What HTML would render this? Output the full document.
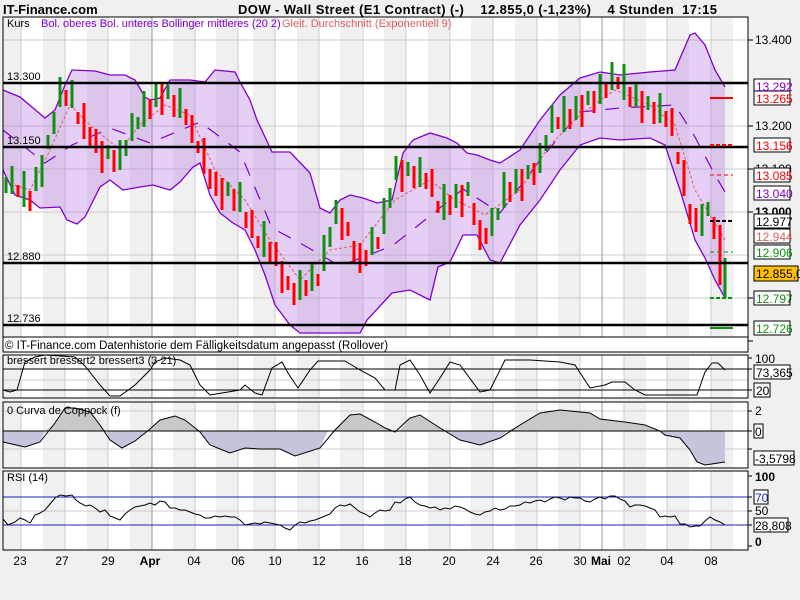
<!DOCTYPE html>
<html><head><meta charset="utf-8">
<style>
html,body{margin:0;padding:0;background:#f0f0f0;width:800px;height:600px;overflow:hidden}
svg{display:block}
text{font-family:"Liberation Sans",sans-serif}
</style></head><body>
<svg width="800" height="600" xmlns="http://www.w3.org/2000/svg">
<rect x="0" y="0" width="800" height="600" fill="#f0f0f0"/>
<rect x="3" y="17" width="745" height="320" fill="#fff"/>
<rect x="3" y="355" width="745" height="43" fill="#fff"/>
<rect x="3" y="402" width="745" height="66" fill="#fff"/>
<rect x="3" y="471" width="745" height="79" fill="#fff"/>
<g fill="#f0f0f0">
<rect x="3" y="17" width="18" height="533"/><rect x="43" y="17" width="22" height="533"/><rect x="87" y="17" width="21" height="533"/><rect x="130" y="17" width="22" height="533"/><rect x="173" y="17" width="22" height="533"/><rect x="216" y="17" width="22" height="533"/><rect x="253" y="17" width="22" height="533"/><rect x="297" y="17" width="22" height="533"/><rect x="340" y="17" width="22" height="533"/><rect x="384" y="17" width="22" height="533"/><rect x="428" y="17" width="22" height="533"/><rect x="471" y="17" width="22" height="533"/><rect x="515" y="17" width="22" height="533"/><rect x="558" y="17" width="22" height="533"/><rect x="624" y="17" width="22" height="533"/><rect x="667" y="17" width="22" height="533"/><rect x="711" y="17" width="22" height="533"/>
</g>
<g stroke="#ccc" stroke-width="1">
<line x1="21" y1="17" x2="21" y2="550"/><line x1="65" y1="17" x2="65" y2="550"/><line x1="108" y1="17" x2="108" y2="550"/><line x1="195" y1="17" x2="195" y2="550"/><line x1="238" y1="17" x2="238" y2="550"/><line x1="275" y1="17" x2="275" y2="550"/><line x1="319" y1="17" x2="319" y2="550"/><line x1="363" y1="17" x2="363" y2="550"/><line x1="406" y1="17" x2="406" y2="550"/><line x1="450" y1="17" x2="450" y2="550"/><line x1="493" y1="17" x2="493" y2="550"/><line x1="537" y1="17" x2="537" y2="550"/><line x1="580" y1="17" x2="580" y2="550"/><line x1="624" y1="17" x2="624" y2="550"/><line x1="667" y1="17" x2="667" y2="550"/><line x1="711" y1="17" x2="711" y2="550"/>
<line x1="3" y1="40" x2="748" y2="40"/><line x1="3" y1="126" x2="748" y2="126"/><line x1="3" y1="169" x2="748" y2="169"/><line x1="3" y1="212" x2="748" y2="212"/><line x1="3" y1="255" x2="748" y2="255"/><line x1="3" y1="298" x2="748" y2="298"/>
<line x1="3" y1="380" x2="748" y2="380"/><line x1="3" y1="411" x2="748" y2="411"/><line x1="3" y1="449" x2="748" y2="449"/><line x1="3" y1="511" x2="748" y2="511"/>
</g>
<g stroke="#999"><line x1="152" y1="17" x2="152" y2="550"/><line x1="602" y1="17" x2="602" y2="550"/></g>
<g fill="#f0f0f0"><rect x="0" y="352" width="748" height="3"/><rect x="0" y="398" width="748" height="4"/><rect x="0" y="468" width="748" height="3"/></g>

<polygon fill="rgba(175,110,225,0.33)" points="3,90 20,97 45,118 55,110 65,85 72,70 95,71 110,75 125,75 135,80 145,97 150,100 160,98 170,80 190,80 205,82 215,70 235,72 240,82 250,100 257,120 272,152 290,152 310,173 320,208 330,213 340,200 350,195 363,198 377,203 392,200 403,153 413,140 430,133 447,138 457,143 467,153 477,155 490,160 500,163 520,150 540,120 560,95 580,78 600,72 620,75 650,72 675,70 690,35 695,33 705,45 715,70 725,87 725,298 715,280 705,258 695,240 680,190 665,145 650,138 620,140 600,138 580,145 560,170 540,200 520,225 500,263 490,260 477,235 463,235 450,262 438,267 430,300 410,290 392,293 367,320 360,333 300,333 290,325 275,305 265,275 255,250 245,230 233,223 220,213 210,195 200,163 193,167 180,182 170,190 163,188 153,185 140,187 123,190 110,180 100,187 85,217 77,224 67,220 60,207 40,208 30,200 15,195 3,170"/>
<polyline fill="none" stroke="#8000d0" stroke-width="1.3" points="3,90 20,97 45,118 55,110 65,85 72,70 95,71 110,75 125,75 135,80 145,97 150,100 160,98 170,80 190,80 205,82 215,70 235,72 240,82 250,100 257,120 272,152 290,152 310,173 320,208 330,213 340,200 350,195 363,198 377,203 392,200 403,153 413,140 430,133 447,138 457,143 467,153 477,155 490,160 500,163 520,150 540,120 560,95 580,78 600,72 620,75 650,72 675,70 690,35 695,33 705,45 715,70 725,87"/>
<polyline fill="none" stroke="#8000d0" stroke-width="1.3" points="725,298 715,280 705,258 695,240 680,190 665,145 650,138 620,140 600,138 580,145 560,170 540,200 520,225 500,263 490,260 477,235 463,235 450,262 438,267 430,300 410,290 392,293 367,320 360,333 300,333 290,325 275,305 265,275 255,250 245,230 233,223 220,213 210,195 200,163 193,167 180,182 170,190 163,188 153,185 140,187 123,190 110,180 100,187 85,217 77,224 67,220 60,207 40,208 30,200 15,195 3,170"/>
<polyline fill="none" stroke="#8000d0" stroke-width="1.2" stroke-dasharray="14,12" points="3,130 45,163 72,145 110,128 150,143 200,122 240,152 272,228 300,243 340,266 392,246 430,216 463,189 500,213 540,160 580,112 620,108 675,105 695,137 715,175 725,192"/>
<polyline fill="none" stroke="#e06060" stroke-width="1" stroke-dasharray="3,2" points="5,182 30,190 50,150 70,105 90,125 120,150 140,125 165,105 190,115 215,170 245,200 270,240 300,280 330,250 360,245 395,200 430,180 455,200 485,215 520,190 550,145 580,115 615,90 650,105 675,125 695,190 725,240"/>

<path fill="none" stroke="#109010" stroke-width="3" d="M6 177V193M12 166V194M24 171V207M36 167V191M42 155V187M48 135V149M54 112V134M60 77V107M72 80V108M108 145V159M120 140V170M126 140V156M132 113V141M138 117V129M144 91V127M156 83V107M168 85V99M180 88V118M228 182V196M240 182V212M264 221V257M300 270V300M312 263V291M324 235V271M330 227V247M336 200V224M372 227V255M384 198V234M390 188V208M396 156V180M408 162V176M420 157V187M444 184V220M456 184V208M468 182V196M492 208V236M498 208V220M504 172V208M516 169V193M528 165V179M540 143V173M546 135V151M552 105V133M564 96V132M576 96V120M588 91V105M600 74V104M612 62V90M624 64V100M636 83V107M648 96V110M660 93V123M702 204V236M708 202V216M725 258V298"/>
<path fill="none" stroke="#ff0000" stroke-width="3" d="M18 185V197M30 191V211M66 90V106M78 112V124M84 103V139M90 127V147M96 129V153M102 141V173M114 150V172M150 99V119M162 83V115M174 95V117M186 109V125M192 115V143M198 141V153M204 138V174M210 169V189M216 172V196M222 178V210M234 189V211M246 212V228M252 210V238M258 236V248M270 242V262M276 242V266M282 261V293M288 276V290M294 283V305M306 280V296M318 274V286M342 208V240M348 222V236M354 241V263M360 243V273M366 250V266M378 237V249M402 160V192M414 166V188M426 173V189M432 169V197M438 201V213M450 195V215M462 185V217M474 203V225M480 220V250M486 228V244M510 182V202M522 169V201M534 163V185M558 117V129M570 109V129M582 95V127M594 91V113M606 82V98M618 77V89M630 87V107M642 91V123M654 102V124M666 111V127M672 108V136M678 152V164M684 160V196M690 204V224M696 208V232M714 217V239M720 225V285"/>

<g stroke="#000" stroke-width="2.5"><line x1="3" y1="83" x2="748" y2="83"/><line x1="3" y1="147" x2="748" y2="147"/><line x1="3" y1="263" x2="748" y2="263"/><line x1="3" y1="325" x2="748" y2="325"/></g>
<g font-size="11"><text x="7" y="80">13.300</text><text x="7" y="144">13.150</text><text x="7" y="260">12.880</text><text x="7" y="322">12.736</text></g>
<line x1="710" y1="98" x2="733" y2="98" stroke="#f00" stroke-width="2"/>
<line x1="710" y1="145" x2="733" y2="145" stroke="#f00" stroke-width="2" stroke-dasharray="4,2"/>
<line x1="710" y1="175" x2="733" y2="175" stroke="#f00" stroke-width="1" stroke-dasharray="4,3"/>
<line x1="710" y1="221" x2="733" y2="221" stroke="#000" stroke-width="2" stroke-dasharray="4,2"/>
<line x1="710" y1="252" x2="733" y2="252" stroke="#109010" stroke-width="1" stroke-dasharray="4,3"/>
<line x1="710" y1="298" x2="733" y2="298" stroke="#109010" stroke-width="2" stroke-dasharray="4,2"/>
<line x1="710" y1="328" x2="733" y2="328" stroke="#109010" stroke-width="2"/>
<text x="7" y="27" font-size="11">Kurs</text>
<text x="41" y="27" font-size="11" fill="#8000d0">Bol. oberes Bol. unteres Bollinger mittleres (20 2)</text>
<text x="282" y="27" font-size="11" fill="#e06060">Gleit. Durchschnitt (Exponentiell 9)</text>

<rect x="3" y="337" width="745" height="15" fill="#fff" stroke="#000"/>
<text x="5" y="349" font-size="11.5">© IT-Finance.com  Datenhistorie dem Fälligkeitsdatum angepasst (Rollover)</text>

<line x1="3" y1="369" x2="748" y2="369" stroke="#000"/><line x1="3" y1="390" x2="748" y2="390" stroke="#000"/>
<polyline fill="none" stroke="#000" points="3,390 10,392 17,390 25,362 35,357 45,355 75,357 85,366 100,385 110,396 120,396 135,385 150,370 155,362 165,358 180,360 190,365 200,385 210,395 240,390 245,385 255,393 262,395 272,368 282,362 288,373 298,388 310,370 318,361 345,361 360,370 375,378 385,390 395,390 400,365 410,360 420,375 430,393 440,378 450,362 460,365 480,392 490,390 505,360 530,360 560,362 575,365 590,388 605,385 612,382 625,382 635,390 645,395 697,395 705,372 712,363 718,363 725,370"/>
<text x="7" y="364" font-size="11">bressert bressert2 bressert3 (3 21)</text>

<polygon fill="#c8c8c8" points="3,431 45,431 55,423 65,408 75,408 90,412 100,425 106,431 146,431 150,429 160,420 175,416 185,420 200,432 200,431 328,431 335,430 350,415 360,414 375,422 385,428 392,431 400,431 410,418 420,415 440,428 444,431 507,431 520,425 540,413 560,410 590,413 600,419 625,422 645,425 660,431"/>
<polygon fill="#c4c4dc" points="3,431 3,442 25,447 40,442 45,431 106,431 110,440 122,448 135,441 146,431 200,431 210,445 230,453 245,448 260,449 280,449 295,456 320,448 328,431 392,431 395,432 400,431 444,431 460,440 480,445 500,438 507,431 660,431 665,435 680,438 690,450 697,462 705,465 725,462 725,431"/>
<line x1="3" y1="431" x2="748" y2="431" stroke="#000"/>
<polyline fill="none" stroke="#000" points="3,442 25,447 40,442 55,423 65,408 75,408 90,412 100,425 110,440 122,448 135,441 150,429 160,420 175,416 185,420 200,432 210,445 230,453 245,448 260,449 280,449 295,456 320,448 335,430 350,415 360,414 375,422 385,428 395,432 410,418 420,415 440,428 460,440 480,445 500,438 520,425 540,413 560,410 590,413 600,419 625,422 645,425 660,431 665,435 680,438 690,450 697,462 705,465 725,462"/>
<text x="7" y="414" font-size="11">0 Curva de Coppock (f)</text>

<line x1="3" y1="497" x2="748" y2="497" stroke="#2020c0"/><line x1="3" y1="525" x2="748" y2="525" stroke="#2020c0"/>
<polyline fill="none" stroke="#000" points="3,519 8,525 15,522 20,518 25,520 30,523 35,515 40,513 45,510 50,504 55,498 60,495 66,496 72,495 76,500 80,503 86,506 90,505 95,508 100,512 105,510 110,516 115,518 120,520 125,514 130,510 135,507 140,506 145,505 150,503 155,505 160,501 165,502 170,508 175,508 180,510 185,510 190,512 195,514 200,515 205,518 210,518 215,516 220,517 225,516 230,517 235,517 240,520 245,525 250,524 255,523 260,524 265,522 270,523 275,524 280,525 285,528 290,530 295,525 300,522 305,523 310,521 315,520 320,518 325,516 330,514 335,508 340,505 345,506 350,504 355,508 360,512 365,514 370,517 375,513 380,510 385,511 390,510 395,502 400,503 405,499 410,497 415,502 420,505 425,506 430,508 435,507 440,510 445,508 450,509 455,506 460,507 465,509 470,512 475,514 480,515 485,512 490,511 495,508 500,510 505,509 510,506 515,506 520,505 525,502 530,503 535,501 540,500 545,502 550,499 555,497 560,498 565,500 570,497 575,498 580,498 585,501 590,502 595,499 600,497 605,499 610,496 615,496 620,499 625,501 630,507 635,505 640,505 645,506 650,508 655,510 660,517 665,516 670,517 675,516 680,524 685,524 690,527 695,526 700,526 705,521 710,517 715,520 720,522 725,525"/>
<text x="7" y="481" font-size="11">RSI (14)</text>

<g fill="none" stroke="#000"><rect x="3" y="17" width="745" height="320"/><rect x="3" y="355" width="745" height="43"/><rect x="3" y="402" width="745" height="66"/><rect x="3" y="471" width="745" height="79"/></g>

<g stroke="#000"><line x1="748" y1="40" x2="753" y2="40"/><line x1="748" y1="126" x2="753" y2="126"/><line x1="748" y1="169" x2="753" y2="169"/><line x1="748" y1="212" x2="753" y2="212"/><line x1="748" y1="298" x2="753" y2="298"/><line x1="748" y1="341" x2="753" y2="341"/>
<line x1="748" y1="358" x2="752" y2="358"/><line x1="748" y1="369" x2="752" y2="369"/><line x1="748" y1="390" x2="752" y2="390"/><line x1="748" y1="411" x2="752" y2="411"/><line x1="748" y1="431" x2="752" y2="431"/><line x1="748" y1="449" x2="752" y2="449"/><line x1="748" y1="476" x2="752" y2="476"/><line x1="748" y1="497" x2="752" y2="497"/><line x1="748" y1="511" x2="752" y2="511"/><line x1="748" y1="525" x2="752" y2="525"/><line x1="748" y1="546" x2="752" y2="546"/></g>
<g font-size="12">
<text x="755" y="44">13.400</text><text x="755" y="130">13.200</text><text x="755" y="173">13.100</text><text x="755" y="216" font-weight="bold">13.000</text><text x="755" y="302">12.800</text>
</g>
<g font-size="12" stroke="#000" stroke-width="1">
<rect x="754" y="79" width="36" height="14" fill="#fff"/><rect x="754" y="91" width="36" height="14" fill="#fff"/><rect x="754" y="138" width="36" height="14" fill="#fff"/><rect x="754" y="168" width="36" height="14" fill="#fff"/><rect x="754" y="186" width="36" height="14" fill="#fff"/><rect x="754" y="214" width="36" height="14" fill="#fff"/><rect x="754" y="229" width="36" height="14" fill="#fff"/><rect x="754" y="245" width="36" height="14" fill="#fff"/><rect x="754" y="266" width="44" height="15" fill="#ffc000"/><rect x="754" y="291" width="36" height="14" fill="#fff"/><rect x="754" y="321" width="36" height="14" fill="#fff"/>
</g>
<g font-size="12">
<text x="756" y="91" fill="#8000d0">13.292</text><text x="756" y="103" fill="#f00">13.265</text><text x="756" y="150" fill="#f00">13.156</text><text x="756" y="180" fill="#f00">13.085</text><text x="756" y="198" fill="#8000d0">13.040</text><text x="756" y="226">12.977</text><text x="756" y="241" fill="#e06060">12.944</text><text x="756" y="257" fill="#109010">12.906</text><text x="756" y="278">12.855,0</text><text x="756" y="303" fill="#109010">12.797</text><text x="756" y="333" fill="#109010">12.726</text>
</g>
<g font-size="12">
<text x="755" y="363">100</text>
<rect x="754" y="365" width="36" height="14" fill="#fff" stroke="#000"/><text x="756" y="377">73,365</text>
<rect x="754" y="383" width="16" height="14" fill="#fff" stroke="#000"/><text x="756" y="395">20</text>
<text x="755" y="415">2</text>
<rect x="754" y="424" width="9" height="14" fill="#fff" stroke="#000"/><text x="755" y="436">0</text>
<rect x="754" y="451" width="40" height="14" fill="#fff" stroke="#000"/><text x="755" y="463">-3,5798</text>
<text x="755" y="481" font-weight="bold">100</text>
<rect x="754" y="490" width="14" height="14" fill="#fff" stroke="#000"/><text x="755" y="502" fill="#2020c0">70</text>
<text x="755" y="515">50</text>
<rect x="754" y="518" width="34" height="14" fill="#fff" stroke="#000"/><text x="755" y="530">28,808</text>
<text x="755" y="546" font-weight="bold">0</text>
</g>
<g font-size="12" text-anchor="middle">
<text x="20" y="565">23</text><text x="62" y="565">27</text><text x="108" y="565">29</text><text x="150" y="565" font-weight="bold">Apr</text><text x="194" y="565">04</text><text x="238" y="565">06</text><text x="275" y="565">10</text><text x="319" y="565">12</text><text x="362" y="565">16</text><text x="405" y="565">18</text><text x="449" y="565">20</text><text x="493" y="565">24</text><text x="536" y="565">26</text><text x="580" y="565">30</text><text x="601" y="565" font-weight="bold">Mai</text><text x="624" y="565">02</text><text x="667" y="565">04</text><text x="711" y="565">08</text>
</g>
<text x="3" y="14" font-size="13" font-weight="bold">IT-Finance.com</text>
<text x="238" y="14" font-size="13" font-weight="bold" xml:space="preserve" textLength="479" lengthAdjust="spacing">DOW - Wall Street (E1 Contract) (-)    12.855,0 (-1,23%)    4 Stunden  17:15</text>
</svg>
</body></html>
